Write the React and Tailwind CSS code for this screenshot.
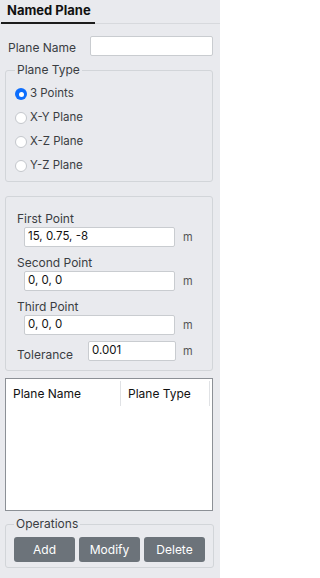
import React from "react";

const font = { fontFamily: "Inter, 'Noto Sans', sans-serif" };

function Radio({ checked, label }) {
  return (
    <div className="flex items-center h-[24px]">
      {checked ? (
        <span className="w-[12px] h-[12px] rounded-full bg-[#0d6efd] flex items-center justify-center">
          <span className="w-[5px] h-[5px] rounded-full bg-white" />
        </span>
      ) : (
        <span className="w-[12px] h-[12px] rounded-full bg-white border border-[#c4c7cc]" />
      )}
      <span className="ml-[3px] text-[11.5px] text-[#3a3d42]">{label}</span>
    </div>
  );
}

function Label({ children, className = "" }) {
  return (
    <div className={"h-[14px] text-[12px] leading-[17px] text-[#3a3d42] " + className}>
      {children}
    </div>
  );
}

function PointRow({ label, value }) {
  return (
    <div className="flex flex-col">
      <Label className="ml-[11px]">{label}</Label>
      <div className="flex items-center mt-[3px]">
        <div className="ml-[18px] w-[151px] h-[20px] bg-white border border-[#c9ccd0] rounded-[2px] flex items-center pl-[3px] text-[11.5px] text-[#111]">
          {value}
        </div>
        <span className="ml-[8px] text-[11px] text-[#555]">m</span>
      </div>
    </div>
  );
}

function Btn({ children }) {
  return (
    <button className="w-[61px] h-[25px] rounded-[3px] bg-[#6c737a] text-white text-[12px]">
      {children}
    </button>
  );
}

export default function App() {
  return (
    <div className="w-[220px] h-[578px] bg-[#e9eaee] overflow-hidden" style={font}>
      {/* tab header */}
      <div className="h-[24px] border-b border-[#d7d9dd] flex">
        <div className="ml-[1px] w-[94px] border-b-2 border-[#1c1c1c] flex items-center pl-[6px] text-[13px] font-bold text-[#111] mb-[-1px]">
          Named Plane
        </div>
      </div>

      {/* plane name */}
      <div className="flex items-center mt-[12px] h-[20px]">
        <Label className="ml-[8px] w-[82px]">Plane Name</Label>
        <div className="w-[123px] h-[20px] bg-white border border-[#c9ccd0] rounded-[2px]" />
      </div>

      {/* plane type */}
      <fieldset className="mx-[5px] mt-[7px] w-[208px] border border-[#d2d5d9] rounded-[3px] pl-[9px] pb-[3px] pt-[0px]">
        <legend className="px-[2px] text-[12px] text-[#3a3d42] leading-[14px]">Plane Type</legend>
        <div className="flex flex-col mt-[5px]">
          <Radio checked label="3 Points" />
          <Radio label="X-Y Plane" />
          <Radio label="X-Z Plane" />
          <Radio label="Y-Z Plane" />
        </div>
      </fieldset>

      {/* points */}
      <div className="mx-[5px] mt-[14px] w-[208px] h-[175px] border border-[#d2d5d9] rounded-[3px] pt-[13px] flex flex-col gap-[7px]">
        <PointRow label="First Point" value="15, 0.75, -8" />
        <PointRow label="Second Point" value="0, 0, 0" />
        <PointRow label="Third Point" value="0, 0, 0" />
        <div className="flex items-center -mt-[1px]">
          <Label className="ml-[11px] w-[71px] mt-[4px]">Tolerance</Label>
          <div className="w-[88px] h-[20px] bg-white border border-[#c9ccd0] rounded-[2px] flex items-center pl-[3px] text-[11.5px] text-[#111]">
            0.001
          </div>
          <span className="ml-[7px] text-[11px] text-[#555]">m</span>
        </div>
      </div>

      {/* table */}
      <div className="mx-[5px] mt-[7px] w-[208px] h-[133px] bg-white border border-[#8c9096]">
        <div className="flex h-[25px] mt-[2px]">
          <div className="w-[115px] border-r border-[#e0e2e5] flex items-center pl-[7px] text-[12px] text-[#111]">
            Plane Name
          </div>
          <div className="w-[89px] border-r border-[#e0e2e5] flex items-center pl-[7px] text-[12px] text-[#111]">
            Plane Type
          </div>
        </div>
      </div>

      {/* operations */}
      <fieldset className="mx-[5px] mt-[6px] w-[208px] border border-[#d2d5d9] rounded-[3px] px-[8px] pb-[5px]">
        <legend className="px-[2px] text-[12px] text-[#3a3d42] leading-[14px]">Operations</legend>
        <div className="flex gap-[4px] mt-[6px]">
          <Btn>Add</Btn>
          <Btn>Modify</Btn>
          <Btn>Delete</Btn>
        </div>
      </fieldset>
    </div>
  );
}
